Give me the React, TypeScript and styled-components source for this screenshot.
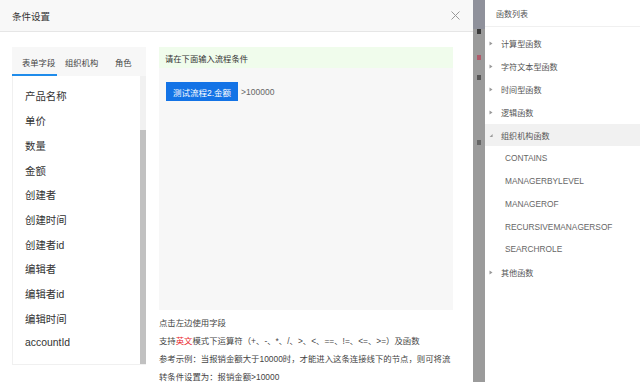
import React from 'react';
import styled, { createGlobalStyle } from 'styled-components';

const GlobalStyle = createGlobalStyle`
  html, body {
    margin: 0;
    padding: 0;
    background: #fff;
    overflow: hidden;
  }
  body {
    font-family: "Liberation Sans", "Noto Sans CJK SC", sans-serif;
    color: #333;
  }
`;

const Page = styled.div`
  display: flex;
  width: 640px;
  height: 382px;
  overflow: hidden;
`;

const Modal = styled.div`
  width: 473px;
  flex: none;
  background: #fff;
  display: flex;
  flex-direction: column;
`;

const ModalHeader = styled.div`
  height: 31px;
  flex: none;
  background: #f8f8f8;
  border-bottom: 1px solid #e6e6e6;
  display: flex;
  align-items: center;
  justify-content: space-between;
  padding: 0 12px 0 12px;
`;

const Title = styled.span`
  font-size: 9.5px;
  color: #333;
`;

const Close = styled.svg`
  width: 9px;
  height: 9px;
  margin-right: 1px;
`;

const ModalBody = styled.div`
  display: flex;
  gap: 13px;
  padding: 15px 20px 0 12px;
`;

const FieldPanel = styled.div`
  width: 134px;
  height: 318px;
  flex: none;
  display: flex;
  flex-direction: column;
  box-shadow: 0 0 0 1px #f0f0f0 inset;
`;

const TabBar = styled.div`
  height: 29px;
  flex: none;
  background: #f7f7f7;
  display: flex;
  align-items: stretch;
`;

const Tab = styled.div<{ $active?: boolean; $w: number; $pl: number }>`
  width: ${(p) => p.$w}px;
  padding-left: ${(p) => p.$pl}px;
  display: flex;
  align-items: center;
  font-size: 8.3px;
  color: #444;
  border-bottom: 2px solid ${(p) => (p.$active ? '#1f8ceb' : 'transparent')};
  box-sizing: border-box;
  padding-top: 2px;
  white-space: nowrap;
`;

const ListArea = styled.div`
  flex: 1;
  display: flex;
  min-height: 0;
`;

const FieldList = styled.div`
  flex: 1;
  padding: 7.6px 0 0 13px;
`;

const FieldItem = styled.div`
  height: 24.7px;
  display: flex;
  align-items: center;
  font-size: 10.4px;
  color: #333;
`;

const ScrollTrack = styled.div`
  width: 6px;
  flex: none;
  background: #f1f1f1;
  display: flex;
  flex-direction: column;
`;

const ScrollThumb = styled.div`
  margin-top: 54px;
  flex: 1;
  margin-bottom: 1px;
  background: #c1c1c1;
`;

const Editor = styled.div`
  width: 294px;
  flex: none;
  display: flex;
  flex-direction: column;
`;

const EditorHint = styled.div`
  height: 21px;
  background: #f0fcec;
  display: flex;
  align-items: center;
  padding-left: 6px;
  font-size: 8.3px;
  color: #333;
`;

const EditorBox = styled.div`
  height: 242px;
  background: #f7f7f7;
  padding: 14px 0 0 7px;
  box-sizing: border-box;
  display: flex;
  align-items: flex-start;
  gap: 3px;
`;

const FieldTag = styled.span`
  height: 19px;
  padding: 0 7px;
  background: #1373e6;
  color: #fff;
  font-size: 8.5px;
  display: flex;
  align-items: center;
`;

const Expr = styled.span`
  height: 19px;
  display: flex;
  align-items: center;
  font-size: 8.5px;
  color: #666;
`;

const Notes = styled.div`
  padding-top: 4px;
  font-size: 8.4px;
  color: #444;
  line-height: 18px;
`;

const Red = styled.span`
  color: #e8262b;
`;

const Mask = styled.div`
  width: 12px;
  flex: none;
  background: #9b9b9b;
  display: flex;
  flex-direction: column;
`;

const MaskTop = styled.div`
  height: 29px;
  background: #8f919b;
`;

const MaskMark = styled.div<{ $color: string; $top: number }>`
  margin-top: ${(p) => p.$top}px;
  margin-left: 4px;
  width: 4px;
  height: 5px;
  background: ${(p) => p.$color};
`;

const FuncPanel = styled.div`
  flex: 1;
  background: #fff;
  display: flex;
  flex-direction: column;
`;

const FuncHeader = styled.div`
  height: 26px;
  border-bottom: 1px solid #f0f0f0;
  display: flex;
  align-items: center;
  padding-left: 11px;
  font-size: 8px;
  color: #555;
`;

const FuncList = styled.div`
  padding-top: 5px;
`;

const FuncRow = styled.div<{ $active?: boolean; $sub?: boolean }>`
  height: 22.9px;
  display: flex;
  align-items: center;
  gap: 8px;
  padding-left: ${(p) => (p.$sub ? 20 : 4)}px;
  background: ${(p) => (p.$active ? '#f1f1f1' : 'transparent')};
  font-size: ${(p) => (p.$sub ? 8.3 : 8.1)}px;
  color: ${(p) => (p.$sub ? '#666' : '#555')};
  white-space: nowrap;
`;

const Caret = styled.svg`
  width: 4px;
  height: 5px;
  flex: none;
`;

const fields = [
  '产品名称',
  '单价',
  '数量',
  '金额',
  '创建者',
  '创建时间',
  '创建者id',
  '编辑者',
  '编辑者id',
  '编辑时间',
  'accountId',
];

const groups = ['计算型函数', '字符文本型函数', '时间型函数', '逻辑函数'];
const orgFuncs = ['CONTAINS', 'MANAGERBYLEVEL', 'MANAGEROF', 'RECURSIVEMANAGERSOF', 'SEARCHROLE'];

const CaretIcon = ({ open }: { open?: boolean }) => (
  <Caret viewBox="0 0 4 5">
    {open ? (
      <path d="M3.6 1 L3.6 4 L0.6 4 Z" fill="#999" />
    ) : (
      <path d="M0.5 0.5 L3.5 2.5 L0.5 4.5 Z" fill="#999" />
    )}
  </Caret>
);

const App: React.FC = () => {
  return (
    <>
      <GlobalStyle />
      <Page>
        <Modal>
          <ModalHeader>
            <Title>条件设置</Title>
            <Close viewBox="0 0 9 9">
              <path d="M0.5 0.5 L8.5 8.5 M8.5 0.5 L0.5 8.5" stroke="#999" strokeWidth="1" />
            </Close>
          </ModalHeader>
          <ModalBody>
            <FieldPanel>
              <TabBar>
                <Tab $active $w={45} $pl={10}>表单字段</Tab>
                <Tab $w={48} $pl={8}>组织机构</Tab>
                <Tab $w={41} $pl={10}>角色</Tab>
              </TabBar>
              <ListArea>
                <FieldList>
                  {fields.map((f) => (
                    <FieldItem key={f}>{f}</FieldItem>
                  ))}
                </FieldList>
                <ScrollTrack>
                  <ScrollThumb />
                </ScrollTrack>
              </ListArea>
            </FieldPanel>
            <Editor>
              <EditorHint>请在下面输入流程条件</EditorHint>
              <EditorBox>
                <FieldTag>测试流程2.金额</FieldTag>
                <Expr>&gt;100000</Expr>
              </EditorBox>
              <Notes>
                <div>点击左边使用字段</div>
                <div>
                  支持<Red>英文</Red>模式下运算符（+、-、*、/、&gt;、&lt;、==、!=、&lt;=、&gt;=）及函数
                </div>
                <div>参考示例：当报销金额大于10000时，才能进入这条连接线下的节点，则可将流</div>
                <div>转条件设置为：报销金额&gt;10000</div>
              </Notes>
            </Editor>
          </ModalBody>
        </Modal>
        <Mask>
          <MaskTop />
          <MaskMark $color="#3a3a3a" $top={0} />
          <MaskMark $color="#b05a6a" $top={21} />
          <MaskMark $color="#555" $top={15} />
          <MaskMark $color="#666" $top={60} />
        </Mask>
        <FuncPanel>
          <FuncHeader>函数列表</FuncHeader>
          <FuncList>
            {groups.map((g) => (
              <FuncRow key={g}>
                <CaretIcon />
                {g}
              </FuncRow>
            ))}
            <FuncRow $active>
              <CaretIcon open />
              组织机构函数
            </FuncRow>
            {orgFuncs.map((f) => (
              <FuncRow key={f} $sub>
                {f}
              </FuncRow>
            ))}
            <FuncRow>
              <CaretIcon />
              其他函数
            </FuncRow>
          </FuncList>
        </FuncPanel>
      </Page>
    </>
  );
};

export default App;
